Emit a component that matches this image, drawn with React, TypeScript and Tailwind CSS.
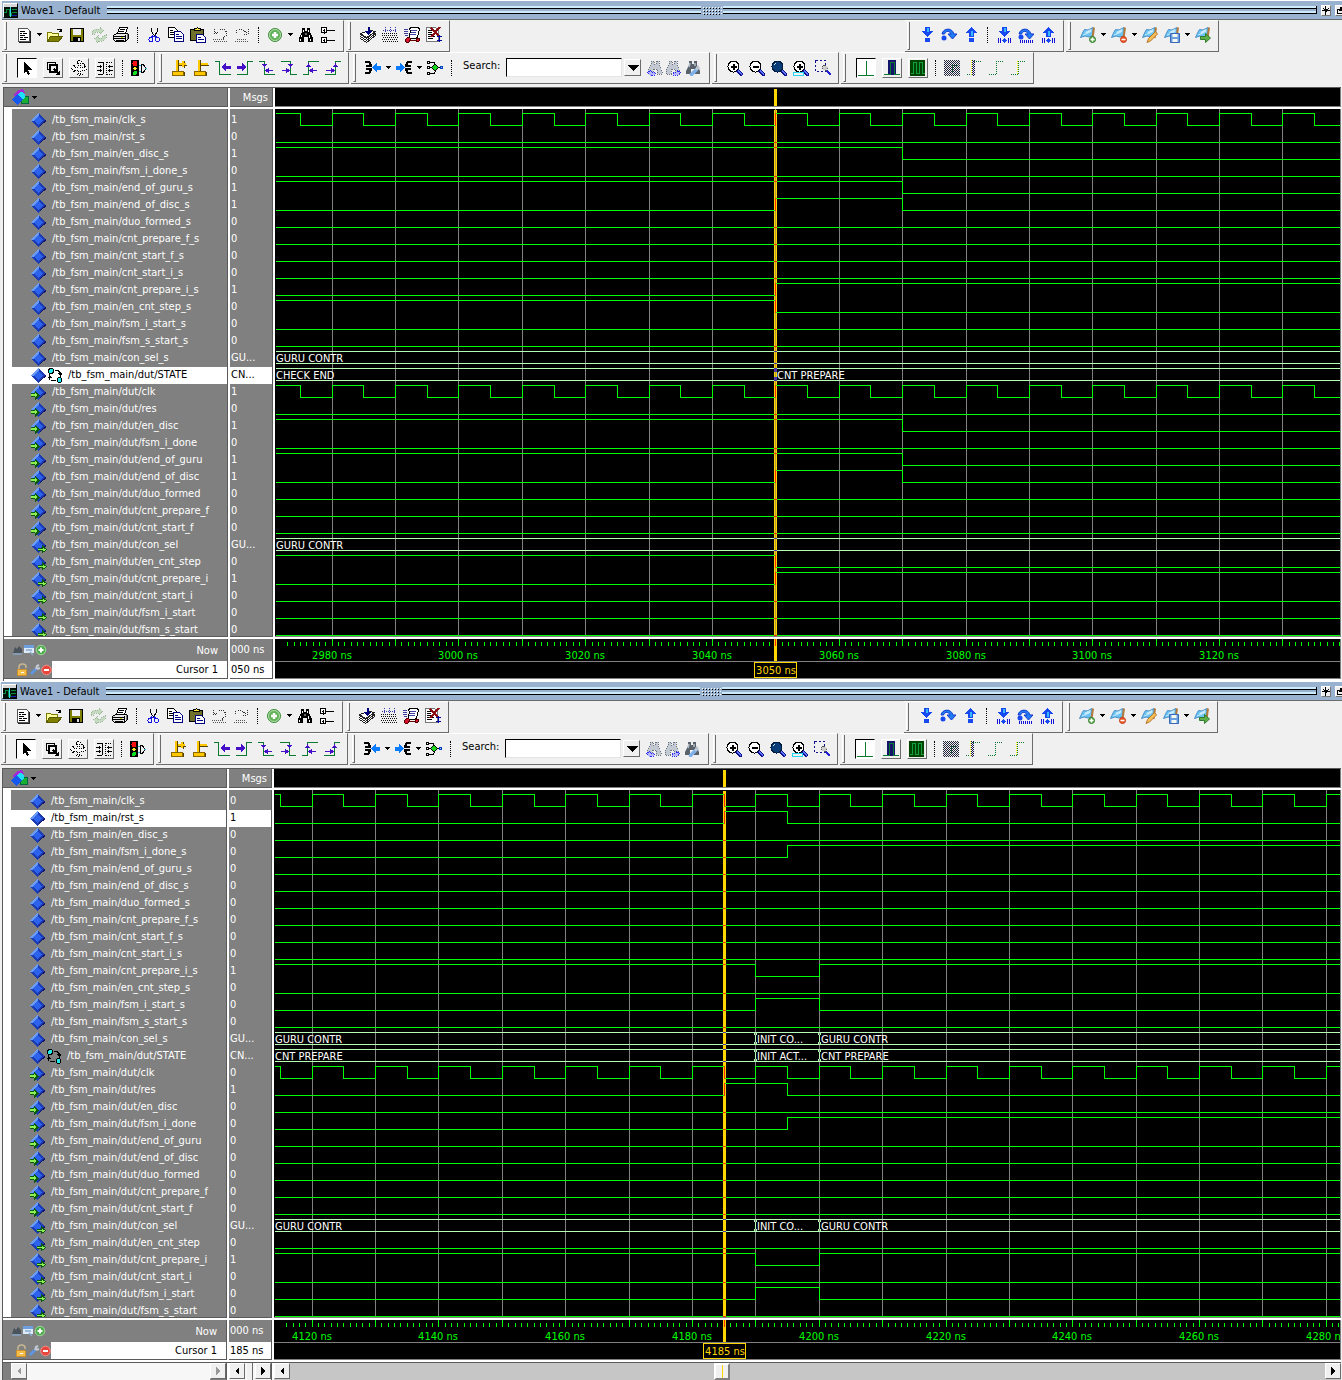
import React, { useId } from "react";

/* ---------- data ---------- */

type Level = { kind: "bit"; start: 0 | 1; edges: number[] };
type Clock = { kind: "clock" };
type Bus = { kind: "bus"; parts: { at: number | null; text: string }[] };
type Wave = Level | Clock | Bus;
type Port = "none" | "in" | "out" | "state";
type Signal = { name: string; port: Port; value: string; wave: Wave; selected?: boolean };

type PanelData = {
  firstTime: number;
  lastLabel: number;
  firstX: number;
  cursor: number;
  cursorLabel: string;
  cursorValue: string;
  signals: Signal[];
};

const NAMES: [string, Port][] = [
  ["clk_s", "none"],
  ["rst_s", "none"],
  ["en_disc_s", "none"],
  ["fsm_i_done_s", "none"],
  ["end_of_guru_s", "none"],
  ["end_of_disc_s", "none"],
  ["duo_formed_s", "none"],
  ["cnt_prepare_f_s", "none"],
  ["cnt_start_f_s", "none"],
  ["cnt_start_i_s", "none"],
  ["cnt_prepare_i_s", "none"],
  ["en_cnt_step_s", "none"],
  ["fsm_i_start_s", "none"],
  ["fsm_s_start_s", "none"],
  ["con_sel_s", "none"],
  ["dut/STATE", "state"],
  ["dut/clk", "in"],
  ["dut/res", "in"],
  ["dut/en_disc", "in"],
  ["dut/fsm_i_done", "in"],
  ["dut/end_of_guru", "in"],
  ["dut/end_of_disc", "in"],
  ["dut/duo_formed", "in"],
  ["dut/cnt_prepare_f", "in"],
  ["dut/cnt_start_f", "in"],
  ["dut/con_sel", "out"],
  ["dut/en_cnt_step", "out"],
  ["dut/cnt_prepare_i", "out"],
  ["dut/cnt_start_i", "out"],
  ["dut/fsm_i_start", "out"],
  ["dut/fsm_s_start", "out"],
];

const low: Wave = { kind: "bit", start: 0, edges: [] };
const clock: Wave = { kind: "clock" };
const bit = (start: 0 | 1, ...edges: number[]): Wave => ({ kind: "bit", start, edges });

function build(values: string[], waves: Record<number, Wave>, selected: number): Signal[] {
  return NAMES.map(([name, port], i) => ({
    name: "/tb_fsm_main/" + name,
    port,
    value: values[i],
    wave: waves[i] ?? low,
    selected: i === selected,
  }));
}

const guruOnly: Wave = { kind: "bus", parts: [{ at: null, text: "GURU_CONTR" }] };
const guruInit: Wave = {
  kind: "bus",
  parts: [
    { at: null, text: "GURU_CONTR" },
    { at: 4190, text: "INIT_CO..." },
    { at: 4200, text: "GURU_CONTR" },
  ],
};

const TOP: PanelData = {
  firstTime: 2980,
  lastLabel: 3120,
  firstX: 57,
  cursor: 3050,
  cursorLabel: "3050 ns",
  cursorValue: "050 ns",
  signals: build(
    "1 0 1 0 1 1 0 0 0 0 1 0 0 0 GU... CN... 1 0 1 0 1 1 0 0 0 GU... 0 1 0 0 0".split(" "),
    {
      0: clock,
      2: bit(1, 3070),
      4: bit(1, 3070),
      5: bit(0, 3050, 3070),
      10: bit(0, 3050),
      11: bit(1, 3050),
      14: guruOnly,
      15: { kind: "bus", parts: [{ at: null, text: "CHECK_END" }, { at: 3050, text: "CNT_PREPARE" }] },
      16: clock,
      18: bit(1, 3070),
      20: bit(1, 3070),
      21: bit(0, 3050, 3070),
      25: guruOnly,
      26: bit(1, 3050),
      27: bit(0, 3050),
    },
    15
  ),
};

const BOTTOM: PanelData = {
  firstTime: 4120,
  lastLabel: 4280,
  firstX: 38,
  cursor: 4185,
  cursorLabel: "4185 ns",
  cursorValue: "185 ns",
  signals: build(
    "0 1 0 0 0 0 0 0 0 0 1 0 0 0 GU... CN... 0 1 0 0 0 0 0 0 0 GU... 0 1 0 0 0".split(" "),
    {
      0: clock,
      1: bit(0, 4185, 4195),
      3: bit(0, 4195),
      10: bit(1, 4190, 4200),
      12: bit(0, 4190, 4200),
      14: guruInit,
      15: {
        kind: "bus",
        parts: [
          { at: null, text: "CNT_PREPARE" },
          { at: 4190, text: "INIT_ACT..." },
          { at: 4200, text: "CNT_PREPARE" },
        ],
      },
      16: clock,
      17: bit(0, 4185, 4195),
      19: bit(0, 4195),
      25: guruInit,
      27: bit(1, 4190, 4200),
      29: bit(0, 4190, 4200),
    },
    1
  ),
};

/* ---------- wave drawing ---------- */

const PER_NS = 6.338;
const RIGHT = 2600;
const ROW = 17;

const timeToX = (p: PanelData, t: number) => Math.floor(p.firstX + 0.2 + PER_NS * (t - p.firstTime));

function range(from: number, to: number, step: number) {
  const out: number[] = [];
  for (let t = from; t <= to; t += step) out.push(t);
  return out;
}

function WaveRow({ p, wave, index }: { p: PanelData; wave: Wave; index: number }) {
  const hi = 4 + index * ROW;
  const lo = hi + 12;
  const cx = timeToX(p, p.cursor);
  if (wave.kind === "bus") {
    return (
      <g>
        <path d={`M1 ${hi + 0.5}H${RIGHT}M1 ${lo + 0.5}H${RIGHT}`} stroke="#b4ffb4" fill="none" />
        <path d={`M${cx - 1} ${hi + 0.5}h3M${cx - 1} ${lo + 0.5}h3`} stroke="#4a3aa8" />
        {wave.parts.map((part, i) => {
          const x = part.at === null ? 0 : timeToX(p, part.at);
          return (
            <g key={i}>
              {part.at === p.cursor && (
                <path d={`M${x + 0.5} ${hi}v4M${x + 0.5} ${lo - 3}v4`} stroke="#4a3aa8" strokeWidth="3" />
              )}
              {part.at !== null && part.at !== p.cursor && (
                <path
                  d={`M${x - 0.5} ${hi}v3M${x + 1.5} ${hi}v3M${x + 0.5} ${hi + 3}v7M${x - 0.5} ${lo - 2}v3M${x + 1.5} ${lo - 2}v3`}
                  stroke="#b4ffb4"
                />
              )}
              <text x={part.at === null ? 1 : x + 2} y={hi + 11} fill="#fff" fontSize="11">
                {part.text.replace(/_/g, "\u00a0")}
              </text>
            </g>
          );
        })}
      </g>
    );
  }
  let level: number = wave.kind === "clock" ? 1 : wave.start;
  const edges = wave.kind === "clock" ? range(p.firstTime - 5, p.firstTime + 400, 5) : wave.edges;
  const yOf = (l: number) => (l ? hi : lo) + 0.5;
  let d = `M1 ${yOf(level)}`;
  let atCursor = yOf(level);
  for (const e of edges) {
    const x = timeToX(p, e) + 0.5;
    level = level ? 0 : 1;
    d += `H${x}V${yOf(level)}`;
    if (e <= p.cursor) atCursor = yOf(level);
  }
  d += `H${RIGHT}`;
  return (
    <g fill="none">
      <path d={d} stroke="#00ff00" strokeLinecap="square" />
      {edges.includes(p.cursor) ? (
        <path d={`M${cx + 0.5} ${hi}V${lo + 1}`} stroke="#ff2a00" />
      ) : (
        <path d={`M${cx - 1} ${atCursor}h3`} stroke="#ff2a00" />
      )}
    </g>
  );
}

function WaveView({ p }: { p: PanelData }) {
  const cx = timeToX(p, p.cursor);
  const grid = range(p.firstTime, p.firstTime + 360, 10);
  return (
    <svg className="block h-[527px] w-full bg-black" shapeRendering="crispEdges" role="img" aria-label="Waveforms">
      {grid.map((t) => (
        <rect key={t} x={timeToX(p, t)} y="0" width="1" height="527" fill="#808080" />
      ))}
      <rect x={cx - 1} y="1" width="3" height="526" fill="#ffd600" />
      {grid.includes(p.cursor) && <rect x={cx} y="0" width="1" height="527" fill="#b89c30" />}
      {p.signals.map((s, i) => (
        <WaveRow key={i} p={p} wave={s.wave} index={i} />
      ))}
    </svg>
  );
}

function Ruler({ p }: { p: PanelData }) {
  const cx = timeToX(p, p.cursor);
  const ticks = range(p.firstTime - 20, p.firstTime + 360, 1);
  return (
    <svg className="block h-[39px] w-full bg-black" shapeRendering="crispEdges" role="img" aria-label="Time scale">
      <path
        d={ticks
          .filter((t) => timeToX(p, t) > 6)
          .map((t) => `M${timeToX(p, t) + 0.5} ${t % 10 === 0 ? 0 : 3}V7`)
          .join("")}
        stroke="#00ff00"
      />
      {range(p.firstTime, p.lastLabel, 20).map((t) => (
        <text key={t} x={timeToX(p, t)} y="20" fontSize="11" fill="#00ff00" textAnchor="middle">
          {t} ns
        </text>
      ))}
      <rect x={cx - 1} y="0" width="3" height="22" fill="#ffd600" />
      <path d={`M${cx + 0.5} 0V7`} stroke="#ff2a00" />
      <path d={`M0 22.5H${RIGHT}`} stroke="#808080" />
      <rect x={cx - 20.5} y="23.5" width="42" height="15" fill="#000" stroke="#ffd600" />
      <text x={cx + 1} y="35" fontSize="11" fill="#ffd600" textAnchor="middle">
        {p.cursorLabel}
      </text>
    </svg>
  );
}

/* ---------- icons ---------- */

function Svg({ children, w = 16, h = 16, crisp = true }: { children: React.ReactNode; w?: number; h?: number; crisp?: boolean }) {
  return (
    <svg width={w} height={h} viewBox={`0 0 ${w} ${h}`} fill="none" className="shrink-0" shapeRendering={crisp ? "crispEdges" : "auto"} aria-hidden="true">
      {children}
    </svg>
  );
}

const flag = (
  <>
    <path d="M4.500 2.500L8 3l5-2.500v8L9 10l-4-1-4.500 1.500L3 5z" fill="#6cc4f4" stroke="#4a90c8" />
    <path d="M6 5l5-2.500v2L6 7zM3 8l3-1" fill="#d6f1ff" stroke="#bfe6fb" />
    <path d="M14 .5L12.500 11" stroke="#b5793a" strokeWidth="2" />
  </>
);

const binoculars = "M4 1h3v3h2V1h3v4l3 6v3h-5v-5H6v5H1v-3l3-6z";

const blueBar = <path d="M2.500 11v5M4.500 11v5M12.500 11v5M14.500 11v5" stroke="#1414d8" />;
const lens = (
  <>
    <circle cx="6.500" cy="6.500" r="5.500" fill="#fff" stroke="#000" />
    <path d="M10.500 10.500l5 5" stroke="#10108c" strokeWidth="3" />
    <path d="M11 10.500l4 4" stroke="#5a78ff" />
  </>
);
const green = "#0a7a30";
const violet = "#4510c8";

const ICONS: Record<string, React.ReactNode> = {
  "New source": (
    <Svg>
      <path d="M2.500 1.500h9l2 2v11h-11z" fill="#fff" stroke="#555" />
      <path d="M14.500 4v11.500H3" stroke="#222" />
      <path d="M4 4.500h5M4 6.500h2M7 6.500h4M4 8.500h5M4 10.500h3M8 10.500h4M4 12.500h6" stroke="#000" />
    </Svg>
  ),
  Open: (
    <Svg>
      <path d="M.5 14.500v-9h4l1 1h6v3" fill="#ffff9c" stroke="#7a7a00" />
      <path d="M.5 14.500l3-5h12l-4 5z" fill="#808000" stroke="#5a5a00" />
      <path d="M9.500 3.500l1-1h3l1 2M12 4.500h3M14.500 2v3" stroke="#000" />
    </Svg>
  ),
  Save: (
    <Svg>
      <path d="M1.500 1.500h13v13h-13z" fill="#808000" stroke="#000" />
      <path d="M4 2h8v6H4z" fill="#f0f0f0" />
      <path d="M4 10h8v4H4z" fill="#000" />
      <path d="M9 11h2v3H9z" fill="#e0e0e0" />
    </Svg>
  ),
  Reload: (
    <Svg>
      <path d="M1 7V4l3-2h5V0l4 4-4 3V5H5L4 7z" fill="#c6dac2" stroke="#9cb898" strokeDasharray="1 1" />
      <path d="M15 8v3l-3 3H7v2l-4-4 4-3v2h4l1-2z" fill="#c6dac2" stroke="#9cb898" strokeDasharray="1 1" />
    </Svg>
  ),
  Print: (
    <Svg>
      <path d="M4.500 6.500l2-6h8l-2 6z" fill="#fff" stroke="#000" />
      <path d="M7 2.500h5M6 4.500h5" stroke="#000" />
      <path d="M.5 8.500l3-2h11l1 1v4l-3 3h-10l-2-2z" fill="#e8e8e8" stroke="#000" />
      <path d="M1 9.500h11M1 11.500h11M12.500 8v6M3 13.500h8" stroke="#000" />
      <path d="M8 10.500h2" stroke="#d8d800" />
      <path d="M14.500 7v5" stroke="#777" />
    </Svg>
  ),
  Cut: (
    <Svg>
      <path d="M5.500 1v3l2 4M11.500 1v3l-3 5" stroke="#000" />
      <path d="M7 8.500l-1 2M9 8.500l1 2" stroke="#1414e0" strokeWidth="2" />
      <circle cx="5" cy="12.500" r="2" stroke="#1414e0" />
      <circle cx="11.500" cy="12.500" r="2" stroke="#1414e0" />
    </Svg>
  ),
  Copy: (
    <Svg>
      <path d="M.5.500h6l3 3v7h-9z" fill="#fff" stroke="#000" />
      <path d="M2 3.500h3M2 5.500h4M2 7.500h4" stroke="#000" />
      <path d="M6.500 4.500h6l3 3v7h-9z" fill="#fff" stroke="#000080" />
      <path d="M8 7.500h3M8 9.500h6M8 11.500h6" stroke="#000080" />
    </Svg>
  ),
  Paste: (
    <Svg>
      <path d="M.5 2.500h13v11H.500z" fill="#70702a" stroke="#000" />
      <path d="M4.500 3.500v-2h2l1-1 1 1h2v2z" fill="#ffe94a" stroke="#000" />
      <path d="M6.500 7.500h6l3 3v5h-9z" fill="#fff" stroke="#000080" />
      <path d="M8 10.500h3M8 12.500h6" stroke="#000080" />
    </Svg>
  ),
  Undo: (
    <Svg>
      <path d="M2 2v4h4M3 5l4 0M8 2.500h4l2 2v4l-3 3" stroke="#333" strokeDasharray="1 1" />
      <path d="M1 12.500h11M2 14.500h14" stroke="#555" strokeDasharray="1 1" />
    </Svg>
  ),
  Redo: (
    <Svg>
      <path d="M14 2v5h-5M13 6l-5-4H4l-2 2v3" stroke="#333" strokeDasharray="1 1" />
      <path d="M3 12.500h10M1 14.500h14" stroke="#555" strokeDasharray="1 1" />
    </Svg>
  ),
  Add: (
    <Svg crisp={false}>
      <circle cx="8" cy="8" r="6.500" fill="#5fb356" stroke="#3f8f3d" />
      <circle cx="8" cy="8" r="5.500" stroke="#b5dcae" />
      <path d="M8 5v6M5 8h6" stroke="#fff" strokeWidth="2.500" />
    </Svg>
  ),
  Find: (
    <Svg>
      <path d="M4 1h3v3h2V1h3v4l3 6v4h-5v-5H6v5H1v-4l3-6z" fill="#000" />
      <path d="M5.500 3v2M3.500 8v2M10.500 3v2M11.500 8v3M2.500 12v2M12.500 12v2" stroke="#fff" />
      <path d="M7 6h2v2H7z" fill="#666" />
    </Svg>
  ),
  "Expand tree": (
    <Svg>
      <path d="M1.500.500h5v5h-5zM1.500 10.500h5v5h-5z" fill="#fff" stroke="#000" />
      <path d="M3 3.500h2M3 13.500h2M4.500 2v2.500M4.500 12v2.500M7 3.500h8M7 13.500h8M4.500 6v1" stroke="#000" />
    </Svg>
  ),
  Compile: (
    <Svg>
      <path d="M.5 11.500l6 4 9-7v-2l-9 4" stroke="#222" fill="#fff" />
      <path d="M.5 9.500l6 4 9-7M.5 7.500l6 4 9-7" stroke="#222" fill="#fff" />
      <path d="M.5 6.500l9-3 6 1-9 6z" stroke="#222" fill="#fff" />
      <path d="M8.500 0v6" stroke="#00007c" strokeWidth="2" />
      <path d="M5 4h7L8.500 8z" fill="#00007c" />
    </Svg>
  ),
  "Compile all": (
    <Svg>
      <path d="M0 6.500h16M0 8.500h16M1 10.500h15M0 12.500h16M1 14.500h15" stroke="#111" strokeDasharray="1 1" />
      <path d="M3.500 0v5M8.500 0v5M13.500 0v5M1 3.500h14" stroke="#3838a8" strokeDasharray="1 1" />
    </Svg>
  ),
  Simulate: (
    <Svg>
      <path d="M5.500 1.500l2-1h7l1 2-2 7-1 2h-8l2-7z" fill="#fff" stroke="#000" />
      <path d="M0 2.500h4M0 4.500h4M0 6.500h4M7 3.500h6M7 5.500h5M6 7.500h6M1 8.500h3" stroke="#4040a0" />
      <path d="M3 11l2-1 2 2-2 3H2l-1-2zM12 11h3v3l-2 1-1-2z" fill="#d0142c" stroke="#500" />
      <path d="M5 13.500h8" stroke="#600" />
    </Svg>
  ),
  Break: (
    <Svg>
      <path d="M.5.500h9l3 2v12H.500z" fill="#fff" stroke="#777" />
      <path d="M2 3.500h5M2 5.500h4M2 7.500h5M2 9.500h7M2 11.500h5" stroke="#000" />
      <path d="M5 1l9 9M14 0L5 10" stroke="#8c0f14" strokeWidth="2" />
      <path d="M13.500 8v7M11 13.500h5M11 9.500h5" stroke="#00009c" />
    </Svg>
  ),
  "Step into": (
    <Svg>
      <path d="M6 0h5v4h3L8.500 10 3 4h3z" fill="#1748f0" />
      <path d="M8 1h2v4H8z" fill="#35b8ff" />
      <circle cx="8.500" cy="13" r="2.500" fill="#1748f0" />
    </Svg>
  ),
  "Step over": (
    <Svg crisp={false}>
      <path d="M1 7c1-6 10-7 12 0h3l-4.500 5L7 7h3C9 4 5 3 3.500 7z" fill="#1e7cf4" stroke="#1438d0" />
      <circle cx="3" cy="11" r="2.500" fill="#1748f0" />
    </Svg>
  ),
  "Step out": (
    <Svg>
      <path d="M6 10h5V6h3L8.500 0 3 6h3z" fill="#1748f0" />
      <path d="M8 4h2v5H8z" fill="#35b8ff" />
      <circle cx="8.500" cy="13" r="2.500" fill="#1748f0" />
    </Svg>
  ),
  "Step into instance": (
    <Svg>
      <path d="M6 0h5v4h3L8.500 10 3 4h3z" fill="#1748f0" />
      <path d="M8 1h2v4H8z" fill="#35b8ff" />
      <circle cx="8.500" cy="13.500" r="2.200" fill="#1748f0" />
      {blueBar}
    </Svg>
  ),
  "Step over instance": (
    <Svg crisp={false}>
      <path d="M1 7c1-6 10-7 12 0h3l-4.500 5L7 7h3C9 4 5 3 3.500 7z" fill="#1e7cf4" stroke="#1438d0" />
      <circle cx="3" cy="10" r="2.500" fill="#1748f0" />
      <path d="M2 14.500h14" stroke="#1414d8" strokeDasharray="1 1" strokeWidth="3" />
    </Svg>
  ),
  "Step out instance": (
    <Svg>
      <path d="M6 10h5V6h3L8.500 0 3 6h3z" fill="#1748f0" />
      <path d="M8 4h2v5H8z" fill="#35b8ff" />
      <circle cx="8.500" cy="13.500" r="2.200" fill="#1748f0" />
      {blueBar}
    </Svg>
  ),
  "Add bookmark": (
    <Svg crisp={false}>
      {flag}
      <circle cx="12.500" cy="12.500" r="3" fill="#5fae4a" stroke="#2f7d2c" />
      <path d="M12.500 10.500v4M10.500 12.500h4" stroke="#fff" strokeWidth="1.500" />
    </Svg>
  ),
  "Delete bookmark": (
    <Svg crisp={false}>
      {flag}
      <circle cx="12.500" cy="12.500" r="3" fill="#ef5a2a" stroke="#c23a10" />
      <path d="M10.500 12.500h4" stroke="#fff" strokeWidth="1.500" />
    </Svg>
  ),
  "Edit bookmark": (
    <Svg crisp={false}>
      {flag}
      <path d="M5 15.500l1.500-4 7-7 2 2.500-7 7z" fill="#f5bf5a" stroke="#b5762a" />
    </Svg>
  ),
  "Save bookmarks": (
    <Svg crisp={false}>
      {flag}
      <path d="M6.500 6.500h9v9h-9z" fill="#6aa0e0" stroke="#3a68b8" />
      <path d="M8.500 7h5v3h-5zM8.500 12h5v3h-5z" fill="#f4faf0" />
    </Svg>
  ),
  "Go to bookmark": (
    <Svg crisp={false}>
      {flag}
      <path d="M5.500 9.500h5v-3l5 4.500-5 4.500v-3h-5z" fill="#5fae4a" stroke="#2f7d2c" />
    </Svg>
  ),
  Select: (
    <Svg>
      <path d="M5 2l8 8H9l2 4-2 1-2-4-2 2z" fill="#000" />
    </Svg>
  ),
  "Zoom mode": (
    <Svg>
      <path d="M2 9.500h2M2.500 9V2.500h8V5" stroke="#000" />
      <path d="M5 5h7v7H5z" stroke="#000" strokeWidth="2" />
      <path d="M9 9l5 5" stroke="#000" strokeWidth="2" />
      <path d="M15 10v5h-5z" fill="#000" />
    </Svg>
  ),
  "Pan mode": (
    <Svg>
      <path
        d="M8.500 0l3 3h-2v4h4V5l3 3.500-3 3V10h-4v4h2l-3 2-3-2h2v-4h-4v2l-3-3.500L3.500 5v2h4V3h-2z"
        stroke="#000"
        strokeDasharray="1 1"
        fill="#f8f8f8"
      />
    </Svg>
  ),
  "Edit mode": (
    <Svg w={18}>
      <path d="M2 2.500h5M7.500 2v12M2 14.500h5" stroke="#000" />
      <path d="M10.500 2v13M11 2.500h5M11 14.500h5" stroke="#000" strokeDasharray="1 1" />
      <path d="M1 6.500h5M1 10.500h5M4.500 5v3M4.500 9v3M12 6.500h5M12 10.500h5M13.500 5v3M13.500 9v3" stroke="#000" />
    </Svg>
  ),
  "Stop drawing": (
    <Svg>
      <path d="M0 0h8v16H0z" fill="#000" />
      <circle cx="4" cy="3.500" r="2.500" fill="#ff1010" />
      <circle cx="4" cy="8.500" r="1.800" fill="#ffee30" />
      <circle cx="4" cy="13" r="2" fill="#10e020" />
      <path d="M10.500 4.500c5 0 5 8 0 8z" stroke="#000" />
      <path d="M8 5.500h2M8 11.500h2M14 8.500h2" stroke="#38b8d8" />
    </Svg>
  ),
  "Insert cursor": (
    <Svg>
      <path d="M7.500 0v11M2 15.500h11V12M8 5.500h8M13.500 1v7" stroke="#5a4200" />
      <path d="M6 0v11M8 4h7M12 1v6" stroke="#ffc800" strokeWidth="2" />
      <path d="M1 11h11v4H1z" fill="#ffc800" stroke="#8a6600" />
    </Svg>
  ),
  "Delete cursor": (
    <Svg>
      <path d="M7.500 0v11M2 15.500h11V12M8 5.500h8" stroke="#5a4200" />
      <path d="M6 0v11M8 4h7" stroke="#ffc800" strokeWidth="2" />
      <path d="M1 11h11v4H1z" fill="#ffc800" stroke="#8a6600" />
    </Svg>
  ),
  "Previous transition": (
    <Svg>
      <path d="M0 1.500h4.500v13H16" stroke={green} />
      <path d="M9 7h7" stroke={violet} strokeWidth="3" />
      <path d="M6 7l5-4v8z" fill={violet} />
    </Svg>
  ),
  "Next transition": (
    <Svg>
      <path d="M0 14.500h10.500v-13H16" stroke={green} />
      <path d="M0 7h7" stroke={violet} strokeWidth="3" />
      <path d="M10 7L5 3v8z" fill={violet} />
    </Svg>
  ),
  "Previous falling edge": (
    <Svg>
      <path d="M0 1.500h5.500v13H16" stroke={green} />
      <path d="M7 10.500h7" stroke={violet} />
      <path d="M6 10.500l4-3v6zM3 4h5L5.500 8z" fill={violet} />
    </Svg>
  ),
  "Next falling edge": (
    <Svg>
      <path d="M0 1.500h9.500v13H16" stroke={green} />
      <path d="M1 10.500h7" stroke={violet} />
      <path d="M9 10.500l-4-3v6zM7 4h5L9.500 8z" fill={violet} />
    </Svg>
  ),
  "Previous rising edge": (
    <Svg>
      <path d="M0 14.500h5.500v-13H16" stroke={green} />
      <path d="M7 10.500h7" stroke={violet} />
      <path d="M6 10.500l4-3v6zM3 7h5L5.500 3z" fill={violet} />
    </Svg>
  ),
  "Next rising edge": (
    <Svg>
      <path d="M0 14.500h10.500v-13H16" stroke={green} />
      <path d="M1 10.500h7" stroke={violet} />
      <path d="M10 10.500l-4-3v6zM8 7h5L10.500 3z" fill={violet} />
    </Svg>
  ),
  "Trace drivers": (
    <Svg>
      <path d="M0 2h4l2 3v1H1M1 9h5v1l-2 3H0" stroke="#000" strokeWidth="2" />
      <path d="M7 7.500l5-5v3h4v4h-4v3z" fill="#0c7cff" />
    </Svg>
  ),
  "Trace readers": (
    <Svg>
      <path d="M16 2h-4l-2 3v1h5M15 9h-5v1l2 3h4" stroke="#000" strokeWidth="2" />
      <path d="M9 7.500l-5-5v3H0v4h4v3z" fill="#0c7cff" />
    </Svg>
  ),
  "Trace net": (
    <Svg>
      <path d="M3 2.500h4l2 3M3 7.500h11M3 13.500h4l2-3" stroke="#000" />
      <path d="M.5 1.500h2v2h-2zM.5 6.500h2v2h-2zM.5 12.500h2v2h-2z" fill="#fff" stroke="#000" />
      <path d="M8 4l3.500 3.500L8 11 4.500 7.500z" fill="#18d818" stroke="#000" />
      <path d="M13.500 6.500h2v2h-2z" fill="#9cf" stroke="#0040c0" />
    </Svg>
  ),
  "Search backward": (
    <Svg>
      <path d={binoculars} fill="#c3c9d2" stroke="#6a727c" strokeDasharray="1 1" />
      <path d="M0 13l4-3v2h4v3H4v1z" fill="#b4b4f8" stroke="#2a2af0" strokeDasharray="1 1" />
    </Svg>
  ),
  "Search forward": (
    <Svg>
      <path d={binoculars} fill="#c3c9d2" stroke="#6a727c" strokeDasharray="1 1" />
      <path d="M16 13l-4-3v2H8v3h4v1z" fill="#b4b4f8" stroke="#2a2af0" strokeDasharray="1 1" />
    </Svg>
  ),
  "Search options": (
    <Svg crisp={false}>
      <path d={binoculars} fill="#59616b" />
      <path d="M5 3l-1 4M10 3v3" stroke="#b8c0c8" strokeWidth="1.500" />
      <path d="M6.500 14.500l5-5" stroke="#7fb0ea" strokeWidth="3.500" strokeLinecap="round" />
      <path d="M11 10l1-3 2-1M12 9l3-1" stroke="#c2cad4" strokeWidth="1.500" />
    </Svg>
  ),
  "Zoom in": (
    <Svg>
      {lens}
      <path d="M6 4h1v2h2v1H7v2H6V7H4V6h2z" fill="#000" stroke="#000" />
    </Svg>
  ),
  "Zoom out": (
    <Svg>
      {lens}
      <path d="M3.500 6.500h6" stroke="#000" strokeWidth="2" />
    </Svg>
  ),
  "Zoom full": (
    <Svg>
      {lens}
      <circle cx="6.500" cy="6.500" r="5.500" fill="#0a3c78" stroke="#001c40" />
      <path d="M3 5l2-2" stroke="#d8e8ff" />
    </Svg>
  ),
  "Zoom in on cursor": (
    <Svg>
      {lens}
      <path d="M6 4h1v2h2v1H7v2H6V7H4V6h2z" fill="#000" stroke="#000" />
      <path d="M.5 12.500h10v3H.500z" stroke="#28d8f0" />
    </Svg>
  ),
  "Zoom range": (
    <Svg>
      <path d="M.5.500h10v11H.500z" stroke="#10108c" strokeDasharray="2 2" />
      <path d="M7 7l3-2 3 3-2 3-3-1z" fill="#ccc" stroke="#555" strokeDasharray="1 1" />
      <path d="M12 11l4 4" stroke="#2020d0" strokeWidth="2" />
    </Svg>
  ),
  "Wave line": (
    <Svg w={18} h={18}>
      <path d="M1 16.500h16M9.500 2v14" stroke={green} />
    </Svg>
  ),
  "Wave pulse": (
    <Svg w={18} h={18}>
      <path d="M5 1h8v15H5z" fill="#14146c" />
      <path d="M1 15.500h6v-12h4v12h6" stroke={green} />
    </Svg>
  ),
  "Wave clock": (
    <Svg w={18} h={18}>
      <path d="M1 1h15v16H1z" fill="#004400" />
      <path d="M2 14.500h2.500v-11h3v11h3v-11h3v11H16" stroke="#10a040" />
    </Svg>
  ),
  "Compare region": (
    <Svg>
      <path
        d="M0 .5h16M0 2.500h16M0 4.500h16M0 6.500h16M0 8.500h16M0 10.500h16M0 12.500h16M0 14.500h16"
        stroke="#22223a"
        strokeDasharray="1 1"
      />
      <path
        d="M1 1.500h15M1 3.500h15M1 5.500h15M1 7.500h15M1 9.500h15M1 11.500h15M1 13.500h15M1 15.500h15"
        stroke="#22223a"
        strokeDasharray="1 1"
      />
      <path d="M8 5.500h6M8 5v8" stroke={green} strokeDasharray="1 1" />
    </Svg>
  ),
  "Compare edge": (
    <Svg>
      <path d="M6.500 0v16M8.500 0v16" stroke="#14144c" strokeDasharray="1 1" />
      <path d="M7.500 1v15" stroke="#14144c" strokeDasharray="1 1" />
      <path d="M5.500 0v15" stroke="#f4f000" strokeDasharray="1 1" />
      <path d="M1 14.500h4M8 1.500h7" stroke={green} strokeDasharray="1 1" />
    </Svg>
  ),
  "Next difference": (
    <Svg>
      <path d="M1 14.500h7v-13h8" stroke={green} strokeDasharray="1 1" />
    </Svg>
  ),
  "Last difference": (
    <Svg>
      <path d="M1 14.500h7M8.500 14v-13h7" stroke={green} strokeDasharray="1 1" />
      <path d="M7.500 1v13" stroke="#f4f000" strokeDasharray="1 1" />
    </Svg>
  ),
};

function Diamond({ port }: { port: Port }) {
  return (
    <Svg w={16} h={17}>
      <path d="M7.500 1L15 8.500 7.500 16 0 8.500z" fill="#1c3cb4" />
      <path d="M7.500 1v6L6 9H0z" fill="#6a9cf4" />
      <path d="M7.500 4L12 8.500 7.500 13 3 8.500z" fill="#2c62ec" />
      <path d="M9 14l6-5.500" stroke="#14146c" />
      {port === "in" && (
        <>
          <path d="M0 9h4V7l5 4-5 5v-3H0z" fill="#0b5a10" />
          <path d="M0 10h4V9l3 2-3 2v-1H0z" fill="#8cf050" />
        </>
      )}
      {port === "out" && (
        <>
          <path d="M7 11h4V8l5 4.500-5 4V14H7z" fill="#0b5a10" />
          <path d="M7 12h5v-1l3 1.500-3 2V13H7z" fill="#8cf050" />
        </>
      )}
    </Svg>
  );
}

const StateIcon = () => (
  <Svg>
    <path d="M2.500 5v7M1 9.500h4M2 8.500h2M4 12.500h2M8 2.500h3l2 2v4M11 5.500h4M12 6.500h3" stroke="#000" />
    <circle cx="4" cy="3" r="2.500" fill="#20e8e8" stroke="#000" />
    <circle cx="12.500" cy="12" r="2.500" fill="#20e8e8" stroke="#000" />
    <path d="M5 12.500h4" stroke="#000" />
  </Svg>
);

/* ---------- toolbar ---------- */

function Tool({ name, narrow }: { name: string; narrow?: boolean }) {
  return (
    <button type="button" aria-label={name} className={narrow ? "flex w-[18px] justify-center" : "flex w-[22px] justify-center"}>
      {ICONS[name]}
    </button>
  );
}

function Framed({ name, on }: { name: string; on?: boolean }) {
  return (
    <button
      type="button"
      aria-label={name}
      aria-pressed={!!on}
      className={
        on
          ? "flex size-5 items-center justify-center border border-r-white border-b-white border-t-black border-l-black bg-white"
          : "flex size-5 items-center justify-center border border-t-white border-l-white border-r-[#6b6b6b] border-b-[#6b6b6b] bg-[#f0f0f0]"
      }
    >
      {ICONS[name]}
    </button>
  );
}

function Arrow({ name }: { name: string }) {
  return (
    <button type="button" aria-label={name} className="flex w-[9px] justify-center">
      <Svg w={5} h={3}>
        <path d="M0 0h5v1H4v1H3v1H2V2H1V1H0z" fill="#000" />
      </Svg>
    </button>
  );
}

const Sep = () => (
  <span className="flex w-[11px] justify-center">
    <span className="h-4 border-l border-dotted border-black" />
  </span>
);

function Group({ children, className }: { children: React.ReactNode; className: string }) {
  return (
    <div className={"flex h-8 shrink-0 items-center border-t border-r border-b border-t-white border-r-[#6b6b6b] border-b-[#6b6b6b] " + className}>
      <span className="mt-px mr-1.5 ml-0.5 h-7 w-[3px] self-start border-r border-b border-l border-r-[#6b6b6b] border-b-[#6b6b6b] border-l-white" />
      {children}
    </div>
  );
}

const UPPER = "pb-[3px] pr-1";
const LOWER = "pb-px pr-1";

function Toolbars() {
  const id = useId();
  return (
    <div className="overflow-hidden bg-[#f0f0f0] pb-[3px]">
      <div className="flex gap-0.5">
        <Group className={UPPER}>
          <Tool name="New source" />
          <Arrow name="New source menu" />
          <Tool name="Open" />
          <Tool name="Save" />
          <Tool name="Reload" />
          <Tool name="Print" />
          <Sep />
          <Tool name="Cut" />
          <Tool name="Copy" />
          <Tool name="Paste" />
          <Tool name="Undo" />
          <Tool name="Redo" />
          <Sep />
          <Tool name="Add" />
          <Arrow name="Add menu" />
          <Tool name="Find" />
          <Tool name="Expand tree" />
        </Group>
        <Group className={UPPER}>
          <Tool name="Compile" />
          <Tool name="Compile all" />
          <Tool name="Simulate" />
          <Tool name="Break" />
        </Group>
        <Group className={"ml-[453px] " + UPPER}>
          <Tool name="Step into" />
          <Tool name="Step over" />
          <Tool name="Step out" />
          <Sep />
          <Tool name="Step into instance" />
          <Tool name="Step over instance" />
          <Tool name="Step out instance" />
        </Group>
        <Group className={UPPER}>
          <Tool name="Add bookmark" />
          <Arrow name="Add bookmark menu" />
          <Tool name="Delete bookmark" />
          <Arrow name="Delete bookmark menu" />
          <Tool name="Edit bookmark" />
          <Tool name="Save bookmarks" />
          <Arrow name="Save bookmarks menu" />
          <Tool name="Go to bookmark" />
        </Group>
      </div>
      <div className="flex gap-0.5">
        <Group className={LOWER}>
          <div className="mr-0.5 ml-1 flex gap-1.5">
            <Framed name="Select" on />
            <Framed name="Zoom mode" />
            <Framed name="Pan mode" />
            <Framed name="Edit mode" />
          </div>
          <Sep />
          <Tool name="Stop drawing" />
        </Group>
        <Group className={LOWER}>
          <Tool name="Insert cursor" />
          <Tool name="Delete cursor" />
          <Tool name="Previous transition" />
          <Tool name="Next transition" />
          <Tool name="Previous falling edge" />
          <Tool name="Next falling edge" />
          <Tool name="Previous rising edge" />
          <Tool name="Next rising edge" />
        </Group>
        <Group className="pr-[5px] pb-px">
          <Tool name="Trace drivers" />
          <Arrow name="Trace drivers menu" />
          <Tool name="Trace readers" />
          <Arrow name="Trace readers menu" />
          <Tool name="Trace net" />
          <Sep />
          <label htmlFor={id} className="w-[49px] pb-1 pl-1.5">
            Search:
          </label>
          <input id={id} type="text" className="h-[19px] w-[116px] border border-t-black border-r-[#e4e4e4] border-b-[#e4e4e4] border-l-black bg-white px-1 outline-none" />
          <button
            type="button"
            aria-label="Search history"
            className="mr-[5px] ml-0.5 flex h-[17px] w-[17px] items-center justify-center border border-t-white border-r-[#6b6b6b] border-b-[#6b6b6b] border-l-white"
          >
            <Svg w={12} h={6}>
              <path d="M0 0h12L6 6z" fill="#000" />
            </Svg>
          </button>
          <Tool name="Search backward" narrow />
          <Tool name="Search forward" narrow />
          <Tool name="Search options" />
        </Group>
        <Group className={LOWER}>
          <div className="ml-px flex">
            <Tool name="Zoom in" />
            <Tool name="Zoom out" />
            <Tool name="Zoom full" />
            <Tool name="Zoom in on cursor" />
            <Tool name="Zoom range" />
          </div>
        </Group>
        <Group className={LOWER}>
          <div className="mr-0.5 ml-1 flex gap-1.5">
            <Framed name="Wave line" on />
            <Framed name="Wave pulse" />
            <Framed name="Wave clock" />
          </div>
          <Sep />
          <Tool name="Compare region" />
          <Tool name="Compare edge" />
          <Tool name="Next difference" />
          <Tool name="Last difference" />
        </Group>
      </div>
    </div>
  );
}

/* ---------- title bar ---------- */

const Ridge = () => (
  <>
    <span className="h-[3px] border-t-2 border-b border-t-[#cdeafa] border-b-black" />
    <span className="mt-0.5 h-[3px] border-t-2 border-b border-t-[#cdeafa] border-b-black" />
  </>
);

function TitleBar() {
  return (
    <header className="flex h-[19px] items-center overflow-hidden border-b border-[#6b6b6b] bg-[#99b2cf]">
      <span className="ml-px border border-t-white border-r-black border-b-black border-l-white">
        <Svg w={13} h={13}>
          <path d="M0 0h13v3H0z" fill="#d8d8d8" />
          <path d="M0 3h13v10H0z" fill="#001008" />
          <path d="M0 8.500h2v-3h3v6h2v-3M8 5.500h5M8 8.500h5" stroke="#0a8a3c" />
          <path d="M6.500 3v10" stroke="#30e0f0" />
          <path d="M8 11.500h5" stroke="#1818b0" />
        </Svg>
      </span>
      <h2 className="ml-[3px] w-[86px] whitespace-nowrap pt-px">Wave1 - Default</h2>
      <span className="flex w-[594px] shrink-0 flex-col">
        <Ridge />
      </span>
      <Svg w={22} h={9}>
        <path d="M2 1.500h19M2 4.500h19M2 7.500h19" stroke="#fff" strokeDasharray="1 2" />
        <path d="M3 2.500h18M3 5.500h18M3 8.500h18" stroke="#000" strokeDasharray="1 2" />
      </Svg>
      <span className="flex flex-1 flex-col border-r border-black">
        <Ridge />
      </span>
      <button type="button" aria-label="Undock" className="ml-1 border border-t-white border-r-[#777] border-b-[#777] border-l-white bg-[#f0f0f0]">
        <Svg w={8} h={9}>
          <path d="M3.500 0v3M3.500 6v3M0 4.500h3M5 4.500h3" stroke="#000" />
          <path d="M1 2l6 5M7 2L1 7" stroke="#000" strokeDasharray="1 1" />
        </Svg>
      </button>
      <button type="button" aria-label="Maximize" className="-mr-1 ml-1 border border-t-white border-r-[#777] border-b-[#777] border-l-white bg-[#f0f0f0]">
        <Svg w={9} h={9}>
          <path d="M1.500 3.500h6v4h-6z" stroke="#000" />
          <path d="M4 1h2v3h1v1H3V4h1z" fill="#000" />
        </Svg>
      </button>
    </header>
  );
}

/* ---------- wave pane ---------- */

const NAME_COL = "w-[226px] shrink-0 border-r-2 border-white";
const VALUE_COL = "w-[45px] shrink-0 border-r-2 border-white";
const LINE_R = "border-r border-[#5a5a5a]";

function Columns({ names, values, wave }: { names: React.ReactNode; values: React.ReactNode; wave: React.ReactNode }) {
  return (
    <div className="flex">
      <div className={NAME_COL}>
        <div className={"h-full border-b " + LINE_R}>{names}</div>
      </div>
      <div className={VALUE_COL}>
        <div className={"h-full border-b " + LINE_R}>{values}</div>
      </div>
      <div className="min-w-0 flex-1 border-r border-b border-[#808080]">{wave}</div>
    </div>
  );
}

function SmallIcons({ second }: { second?: boolean }) {
  return second ? (
    <span className="flex items-center">
      <Svg w={13} h={14} crisp={false}>
        <path d="M3 7V4c0-4 7-4 7 0v1" stroke="#c8b890" strokeWidth="1.500" />
        <path d="M1.500 6.500h9v6h-9z" fill="#f3bd4a" stroke="#d0902a" />
        <path d="M5 9.500h3" stroke="#fff" />
      </Svg>
      <Svg w={12} h={14} crisp={false}>
        <path d="M2 11l5-5" stroke="#5f95dc" strokeWidth="3" />
        <path d="M7 6l1-3 2-1M8 6l3-1" stroke="#c4cbd4" strokeWidth="2" />
      </Svg>
      <Svg w={11} h={14} crisp={false}>
        <circle cx="5.500" cy="7" r="4.800" fill="#e8453c" stroke="#f0928c" />
        <path d="M3 7h5" stroke="#fff" strokeWidth="2" />
      </Svg>
    </span>
  ) : (
    <span className="flex items-center">
      <Svg w={11} h={12} crisp={false}>
        <path d="M1 9l2-6 2 2 2-3 3 3v4z" fill="#4a525c" />
        <path d="M1 10h9" stroke="#8ab4e0" />
      </Svg>
      <Svg w={12} h={12} crisp={false}>
        <path d="M1 1h10v8H1z" fill="#dcebfa" />
        <path d="M1 1h10v3H1z" fill="#6f9fdc" />
        <path d="M3 6h6M7 8l3 3" stroke="#8aa8cc" strokeWidth="1.500" />
      </Svg>
      <Svg w={12} h={12} crisp={false}>
        <circle cx="6" cy="6" r="4.800" fill="#4fae4c" stroke="#a2d49c" />
        <path d="M6 3.500v5M3.500 6h5" stroke="#fff" strokeWidth="2" />
      </Svg>
    </span>
  );
}

function ScrollButton({ dir, dim }: { dir: "left" | "right"; dim?: boolean }) {
  return (
    <button
      type="button"
      aria-label={"Scroll " + dir}
      className="flex h-4 w-4 shrink-0 items-center justify-center border border-t-white border-r-[#6b6b6b] border-b-[#6b6b6b] border-l-white bg-[#f0f0f0]"
    >
      <Svg w={4} h={8}>
        <path d={dir === "left" ? "M4 0v8L0 4z" : "M0 0v8l4-4z"} fill={dim ? "#999" : "#000"} />
      </Svg>
    </button>
  );
}

function Scrollbars() {
  return (
    <div className="flex h-[18px] border-t border-[#5a5a5a] bg-[#808080]">
      <div className={NAME_COL}>
        <div className={"flex h-full pl-2 " + LINE_R}>
          <ScrollButton dir="left" dim />
          <span className="flex-1 bg-[#f7f7f7]" />
          <ScrollButton dir="right" dim />
        </div>
      </div>
      <div className={VALUE_COL}>
        <div className={"flex h-full justify-between bg-[#f7f7f7] " + LINE_R}>
          <ScrollButton dir="left" />
          <span className="w-1.5 border-r border-[#6b6b6b] bg-[#f0f0f0]" />
          <ScrollButton dir="right" />
        </div>
      </div>
      <div className="flex min-w-0 flex-1 bg-[#c6c6c6]">
        <ScrollButton dir="left" />
        <span className="basis-[424px]" />
        <span className="flex w-4 shrink-0 justify-center border-2 border-t-white border-r-[#808080] border-b-[#808080] border-l-white bg-[#f0f0f0]">
          <span className="w-px bg-[#ffd600]" />
        </span>
        <span className="flex-1" />
        <ScrollButton dir="right" />
      </div>
    </div>
  );
}

function Panel({ p, scroll, pad }: { p: PanelData; scroll?: boolean; pad: string }) {
  const cx = timeToX(p, p.cursor);
  return (
    <section className={"border-t border-white bg-[#f0f0f0] " + pad}>
      <TitleBar />
      <Toolbars />
      <div className="mr-px ml-px border-t border-l border-[#5a5a5a] bg-white">
        <div className="pb-0.5">
          <Columns
            names={
              <div className="flex h-[18px] items-center bg-[#808080] pl-2">
                <Svg w={18} h={17}>
                  <path d="M6 1l5-1 2 4-6 5-6-3z" fill="#a828d8" />
                  <path d="M9 7h7v7H9z" fill="#18b030" stroke="#064" />
                  <circle cx="9.500" cy="6.500" r="3.500" fill="#20e0f8" />
                  <path d="M5.500 5L11 10.500 5.500 16 0 10.500z" fill="#1458f0" />
                </Svg>
                <Arrow name="Column menu" />
              </div>
            }
            values={<div className="h-[18px] bg-[#808080] pr-1 text-right leading-[20px] text-white">Msgs</div>}
            wave={
              <svg className="block h-[18px] w-full bg-black" shapeRendering="crispEdges" aria-hidden="true">
                <rect x={cx - 1} y="1" width="3" height="17" fill="#ffd600" />
              </svg>
            }
          />
        </div>
        <div className="pb-0.5">
          <Columns
            names={
              <ul className="ml-2 h-[527px] overflow-hidden bg-[#808080] pt-[3px]">
                {p.signals.map((s) => (
                  <li key={s.name} className={"flex h-[17px] items-center pl-[19px] whitespace-nowrap " + (s.selected ? "bg-white text-black" : "text-white")}>
                    <Diamond port={s.port} />
                    {s.port === "state" ? <StateIcon /> : null}
                    <span className="ml-[5px] pb-0.5">{s.name}</span>
                  </li>
                ))}
              </ul>
            }
            values={
              <ul className="h-[527px] overflow-hidden bg-[#808080] pt-[3px]">
                {p.signals.map((s) => (
                  <li key={s.name} className={"flex h-[17px] items-center pl-px " + (s.selected ? "bg-white text-black" : "text-white")}>
                    <span className="pb-0.5">{s.value}</span>
                  </li>
                ))}
              </ul>
            }
            wave={<WaveView p={p} />}
          />
        </div>
        <div className="pb-0.5">
          <Columns
            names={
              <div className="bg-[#808080] pl-2">
                <div className="flex h-[22px] items-center justify-between pr-[9px] text-white">
                  <SmallIcons />
                  <span>Now</span>
                </div>
                <div className="flex h-[17px] items-center pl-1">
                  <SmallIcons second />
                  <span className="h-full flex-1 bg-white pr-[9px] text-right leading-[18px] text-black">Cursor 1</span>
                </div>
              </div>
            }
            values={
              <div className="bg-[#808080]">
                <div className="h-[22px] pl-px leading-[22px] whitespace-nowrap text-white">000 ns</div>
                <div className="h-[17px] bg-white pl-px leading-[18px] whitespace-nowrap text-black">{p.cursorValue}</div>
              </div>
            }
            wave={<Ruler p={p} />}
          />
        </div>
        {scroll && <Scrollbars />}
      </div>
    </section>
  );
}

export default function App() {
  return (
    <main className="bg-[#f0f0f0] font-['DejaVu_Sans_Condensed','Noto_Sans',sans-serif] text-[11px] leading-[13px] text-black">
      <Panel p={TOP} pad="pl-[2px]" />
      <Panel p={BOTTOM} pad="pl-px" scroll />
    </main>
  );
}
